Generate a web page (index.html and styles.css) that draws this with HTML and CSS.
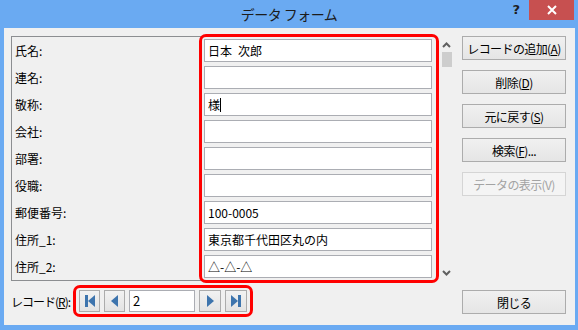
FILE: index.html
```html
<!DOCTYPE html>
<html>
  <head>
    <meta charset="utf-8" />
    <title>データ フォーム</title>
    <link rel="stylesheet" href="styles.css">
  </head>
  <body>
    <div class="window">
      <div class="titlebar">
        <span></span>
        <div class="title">データ フォーム</div>
        <div class="controls">
          <span class="help">?</span>
          <span class="close">
            <svg width="10" height="10" viewBox="0 0 10 10">
              <path d="M1 1 L9 9 M9 1 L1 9" stroke="#fff" stroke-width="2" />
            </svg>
          </span>
        </div>
      </div>
      <div class="content">
        <div class="record-area">
          <div class="record">
            <div class="labels">
              <div class="label">氏名:</div>
              <div class="label">連名:</div>
              <div class="label">敬称:</div>
              <div class="label">会社:</div>
              <div class="label">部署:</div>
              <div class="label">役職:</div>
              <div class="label">郵便番号:</div>
              <div class="label">住所_1:</div>
              <div class="label">住所_2:</div>
            </div>
            <div class="fields">
              <div class="box">日本&ensp;次郎</div>
              <div class="box"></div>
              <div class="box">様<span class="caret"></span></div>
              <div class="box"></div>
              <div class="box"></div>
              <div class="box"></div>
              <div class="box">100-0005</div>
              <div class="box">東京都千代田区丸の内</div>
              <div class="box">△-△-△</div>
            </div>
          </div>
          <div class="nav">
            <span class="nav-label">レコード(<u>R</u>):</span>
            <div class="nav-group">
              <button class="nav-btn">
                <svg width="12" height="12" viewBox="0 0 12 12">
                  <rect x="1" y="0" width="3" height="12" fill="#3d74ad" />
                  <polygon points="11,0 4,6 11,12" fill="#3d74ad" />
                </svg>
              </button>
              <button class="nav-btn">
                <svg width="12" height="12" viewBox="0 0 12 12">
                  <polygon points="9,0 2,6 9,12" fill="#3d74ad" />
                </svg>
              </button>
              <div class="box nav-input">2</div>
              <button class="nav-btn">
                <svg width="12" height="12" viewBox="0 0 12 12">
                  <polygon points="3,0 10,6 3,12" fill="#3d74ad" />
                </svg>
              </button>
              <button class="nav-btn">
                <svg width="12" height="12" viewBox="0 0 12 12">
                  <polygon points="1,0 8,6 1,12" fill="#3d74ad" />
                  <rect x="8" y="0" width="3" height="12" fill="#3d74ad" />
                </svg>
              </button>
            </div>
          </div>
        </div>
        <div class="scrollbar">
          <svg class="arrow" width="9" height="6" viewBox="0 0 9 6">
            <polyline points="1,5 4.5,1.5 8,5" fill="none" stroke="#606060" stroke-width="2" />
          </svg>
          <div class="thumb"></div>
          <svg class="arrow down" width="9" height="6" viewBox="0 0 9 6">
            <polyline points="1,1 4.5,4.5 8,1" fill="none" stroke="#606060" stroke-width="2" />
          </svg>
        </div>
        <div class="actions">
          <button class="btn">レコードの追加(<u>A</u>)</button>
          <button class="btn">削除(<u>D</u>)</button>
          <button class="btn">元に戻す(<u>S</u>)</button>
          <button class="btn">検索(<u>F</u>)...</button>
          <button class="btn" disabled>データの表示(V)</button>
          <button class="btn close-btn">閉じる</button>
        </div>
      </div>
    </div>
  </body>
</html>
```

FILE: styles.css
```css
* {
  box-sizing: border-box;
}
body {
  margin: 0;
  width: 578px;
  height: 330px;
  overflow: hidden;
  background: #6aaaf2;
  font-family: 'Noto Sans CJK JP', sans-serif;
  font-size: 12px;
  color: #000;
}
.window {
  display: flex;
  flex-direction: column;
  height: 330px;
}
.titlebar {
  height: 28px;
  display: grid;
  grid-template-columns: 1fr auto 1fr;
}
.title {
  font-size: 14px;
  line-height: 28px;
  color: #1c1c1c;
  letter-spacing: -0.5px;
}
.controls {
  display: flex;
  justify-content: flex-end;
  align-items: flex-start;
  padding-right: 4px;
}
.help {
  font-family: 'DejaVu Sans', sans-serif;
  font-weight: bold;
  font-size: 13px;
  line-height: 20px;
  color: #1e1e1e;
  margin-right: 9px;
}
.close {
  width: 45px;
  height: 20px;
  background: #c75050;
  display: flex;
  align-items: center;
  justify-content: center;
}
.content {
  flex: 1;
  margin: 0 3px 5px 4px;
  background: #f0f0f0;
  display: flex;
  padding: 8px 9px 11px 7px;
}
.record-area {
  width: 426px;
  display: flex;
  flex-direction: column;
}
.record {
  height: 245px;
  border: 1px solid #8c8e91;
  display: flex;
}
.labels {
  width: 190px;
  padding: 2px 0 0 3px;
}
.label {
  height: 23px;
  line-height: 23px;
  margin-bottom: 4px;
}
.fields {
  width: 234px;
  display: flex;
  flex-direction: column;
  gap: 4px;
  padding: 2px 4px 2px 2px;
  outline: 3px solid #ff0000;
  border-radius: 4px;
}
.box {
  height: 23px;
  border: 1px solid #abadb3;
  background: #fff;
  padding: 0 3px;
  line-height: 21px;
  white-space: pre;
}
.caret {
  display: inline-block;
  width: 1px;
  height: 14px;
  background: #000;
  vertical-align: -2px;
}
.nav {
  display: flex;
  align-items: center;
  margin-top: 7px;
  height: 26px;
}
.nav-label {
  width: 65px;
  flex-shrink: 0;
  white-space: nowrap;
  letter-spacing: -1px;
  padding-top: 1px;
}
.nav-group {
  display: flex;
  gap: 4px;
  padding: 2px 3px;
  outline: 3px solid #ff0000;
  border-radius: 4px;
}
.nav-btn {
  width: 21px;
  height: 22px;
  padding: 0;
  border: 1px solid #acacac;
  background: linear-gradient(#f2f2f2, #e3e3e3);
  display: flex;
  align-items: center;
  justify-content: center;
}
.nav-btn:nth-last-child(-n + 2) {
  width: 22px;
}
.nav-input {
  width: 66px;
  height: 22px;
  line-height: 20px;
  font-size: 13px;
}
.scrollbar {
  width: 19px;
  height: 245px;
  display: flex;
  flex-direction: column;
  align-items: center;
  padding: 6px 0 5px;
}
.thumb {
  width: 10px;
  height: 15px;
  background: #cdcdcd;
  margin-top: 4px;
  margin-left: 1px;
}
.arrow.down {
  margin-top: auto;
}
.actions {
  width: 104px;
  margin-left: 6px;
  display: flex;
  flex-direction: column;
  gap: 10px;
}
.btn {
  height: 24px;
  padding: 0;
  border: 1px solid #acacac;
  background: linear-gradient(#f0f0f0, #e5e5e5);
  font-family: inherit;
  font-size: 12px;
  letter-spacing: -0.6px;
  color: #000;
}
.btn[disabled] {
  color: #a3a3a3;
  border-color: #d5d5d5;
  background: #f4f4f4;
}
.close-btn {
  margin-top: auto;
}
```
